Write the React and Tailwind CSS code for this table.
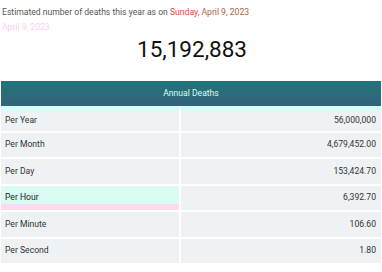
export default function App() {
  const rows = [
    ["Per Year", "56,000,000"],
    ["Per Month", "4,679,452.00"],
    ["Per Day", "153,424.70"],
    ["Per Hour", "6,392.70"],
    ["Per Minute", "106.60"],
    ["Per Second", "1.80"],
  ];
  const firstRow = "pt-[4px] bg-gradient-to-b from-[#d4fff6] from-20% to-[#eef2f4] to-20%";
  const hourRow = "bg-gradient-to-b from-[#d8fbf4] from-75% to-[#ffd9ee] to-75%";
  return (
    <div className="w-[382px] h-[272px] bg-white overflow-hidden" style={{ fontFamily: "Roboto, 'Liberation Sans', sans-serif" }}>
      <div className="pl-[2px] pt-[7px] text-[8.6px] leading-[11px] text-[#555]">
        Estimated number of deaths this year as on <span className="text-[#e8423f]">Sunday</span>
        <span className="text-[#b0603a]">, April 9, 2023</span>
      </div>
      <div className="pl-[2px] mt-[4px] text-[8.6px] leading-[11px] text-[#ffb8f0] opacity-70">April 9, 2023</div>
      <div className="text-center text-[22.5px] leading-[26px] text-[#111] mt-[3px] pl-[2px]">15,192,883</div>
      <div className="mx-[1px] mt-[19px] flex flex-col">
        <div className="h-[25px] flex items-center justify-center text-[8.6px] text-[#d6fff6] bg-gradient-to-b from-[#1a767a] to-[#35617a]">
          Annual Deaths
        </div>
        {rows.map(([k, v], i) => (
          <div key={k} className="flex h-[26.5px] border-b-2 border-white bg-[#eef2f4] text-[8.6px] text-[#333]">
            <div className={`w-[180px] border-r-2 border-white flex items-center pl-[4px] ${i === 0 ? firstRow : ""} ${i === 3 ? hourRow + " text-[#222]" : ""}`}>
              {k}
            </div>
            <div className={`flex-1 flex items-center justify-end pr-[5px] ${i === 0 ? firstRow : ""}`}>{v}</div>
          </div>
        ))}
      </div>
    </div>
  );
}
